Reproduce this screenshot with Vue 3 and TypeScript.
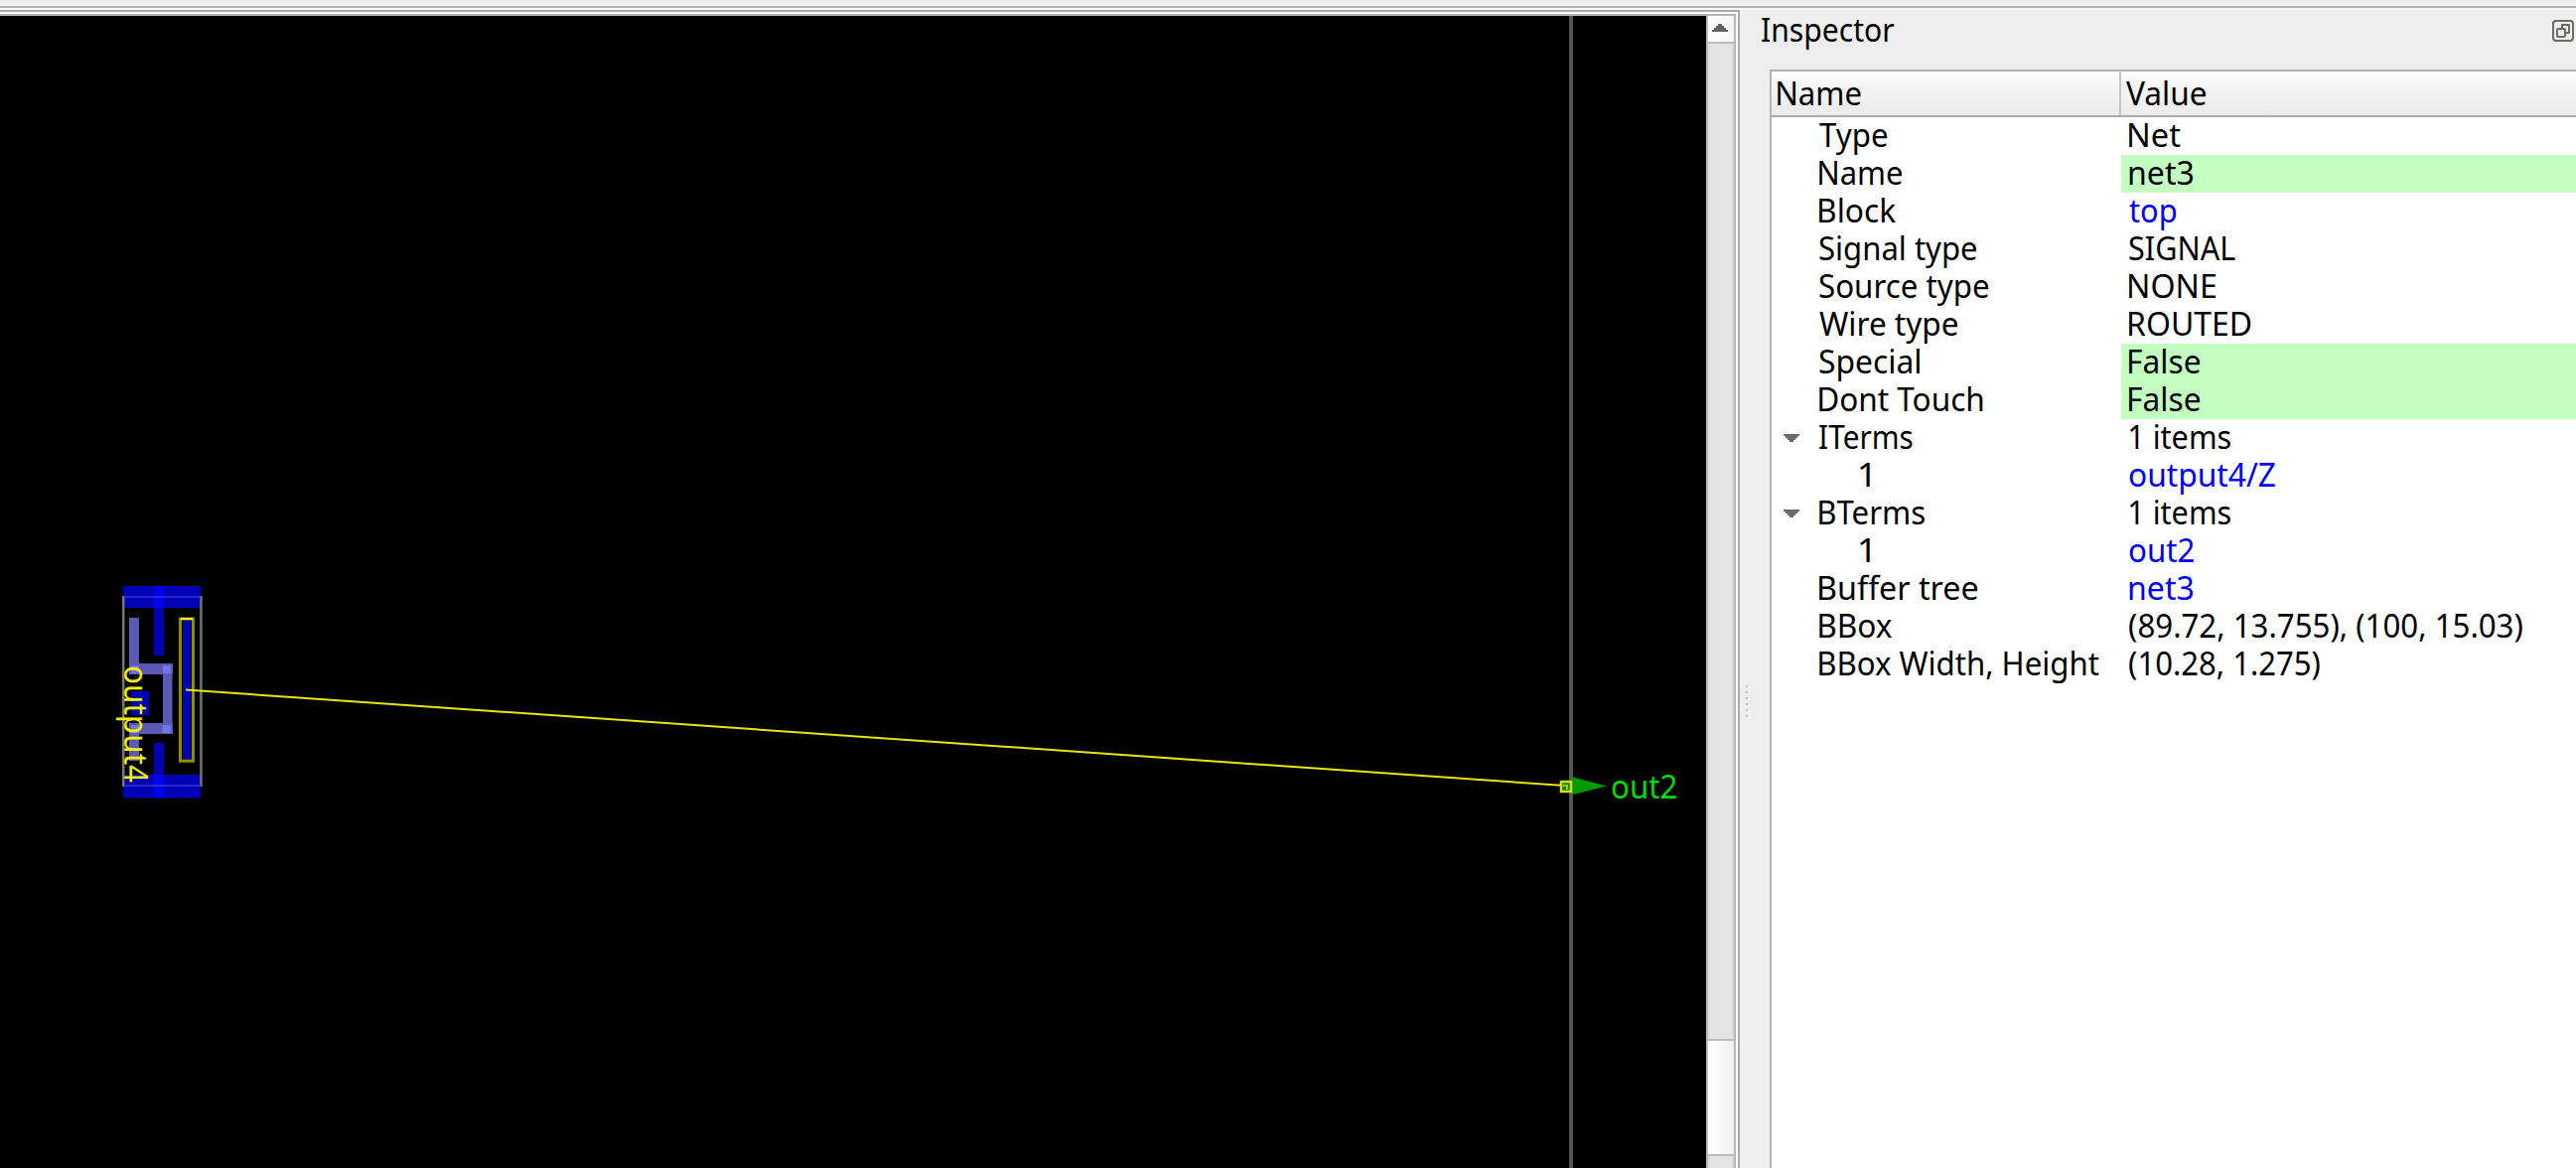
<script setup lang="ts">
import type { Directive } from 'vue'

interface Row {
  name: string
  nameWidth: number
  value: string
  valueWidth: number
  level?: number
  open?: boolean
  link?: boolean
  editable?: boolean
}

const rows: Row[] = [
  { name: 'Type', nameWidth: 68, value: 'Net', valueWidth: 52 },
  { name: 'Name', nameWidth: 83, value: 'net3', valueWidth: 64, editable: true },
  { name: 'Block', nameWidth: 77.5, value: 'top', valueWidth: 47.5, link: true },
  { name: 'Signal type', nameWidth: 158, value: 'SIGNAL', valueWidth: 107 },
  { name: 'Source type', nameWidth: 170, value: 'NONE', valueWidth: 87.5 },
  { name: 'Wire type', nameWidth: 139, value: 'ROUTED', valueWidth: 123 },
  { name: 'Special', nameWidth: 101, value: 'False', valueWidth: 71, editable: true },
  { name: 'Dont Touch', nameWidth: 164.5, value: 'False', valueWidth: 71, editable: true },
  { name: 'ITerms', nameWidth: 94, value: '1 items', valueWidth: 102.5, open: true },
  { name: '1', nameWidth: 11, value: 'output4/Z', valueWidth: 147, level: 1, link: true },
  { name: 'BTerms', nameWidth: 106.5, value: '1 items', valueWidth: 102.5, open: true },
  { name: '1', nameWidth: 11, value: 'out2', valueWidth: 65.5, level: 1, link: true },
  { name: 'Buffer tree', nameWidth: 159, value: 'net3', valueWidth: 64, link: true },
  { name: 'BBox', nameWidth: 73, value: '(89.72, 13.755), (100, 15.03)', valueWidth: 396 },
  { name: 'BBox Width, Height', nameWidth: 282, value: '(10.28, 1.275)', valueWidth: 192 },
]

// Condenses or expands a label so that its visible glyphs span the given width.
const vInk: Directive<HTMLElement, number> = {
  mounted(el, binding) {
    const ctx = document.createElement('canvas').getContext('2d')
    if (!ctx) return
    const style = getComputedStyle(el)
    ctx.font = `${style.fontSize} ${style.fontFamily}`
    const m = ctx.measureText(el.textContent ?? '')
    const scale = binding.value / (m.actualBoundingBoxLeft + m.actualBoundingBoxRight)
    el.style.transform = `translateX(${m.actualBoundingBoxLeft * scale}px) scaleX(${scale})`
  },
}
</script>

<template>
  <div class="window">
    <div class="toolbar-edge"></div>
    <div class="main">
      <div class="view-frame">
        <div class="view">
          <svg class="layout" viewBox="0 16 1718 1160" width="1718" height="1160">
            <rect x="1580" y="16" width="4" height="1160" fill="#555" />

            <g fill="#0000b4">
              <rect x="124" y="590" width="78" height="22" />
              <rect x="155" y="612" width="10" height="48" />
              <rect x="132" y="696" width="18" height="24" />
              <rect x="124" y="780" width="78" height="23.5" />
              <rect x="155" y="748" width="10" height="32" />
            </g>
            <g fill="#0000ec">
              <rect x="155" y="590" width="10" height="22" />
              <rect x="155" y="780" width="10" height="23.5" />
            </g>

            <g fill="#5a5ab4">
              <rect x="130" y="622" width="10" height="57" />
              <rect x="130" y="668" width="44" height="11" />
              <rect x="164" y="668" width="9.5" height="71" />
              <rect x="130" y="728" width="44" height="11" />
              <rect x="130" y="728" width="10" height="38" />
            </g>
            <g fill="#7474ec">
              <rect x="132" y="670" width="8" height="8" />
              <rect x="164" y="670" width="8" height="8" />
              <rect x="164" y="730" width="8" height="8" />
              <rect x="132" y="730" width="8" height="8" />
            </g>

            <g fill="#747474">
              <rect x="123" y="600" width="2.5" height="192" />
              <rect x="201.2" y="600" width="2.5" height="192" />
            </g>
            <g fill="#2828d2">
              <rect x="125.5" y="600" width="76" height="2" />
              <rect x="125.5" y="790" width="76" height="2" />
            </g>

            <rect x="184" y="624" width="8" height="142" fill="#0000b4" />
            <rect x="181.5" y="623" width="13" height="143.2" fill="none" stroke="#8e8e00" stroke-width="3" />
            <rect x="182" y="622" width="12" height="2" fill="#ff0" />

            <text
              class="label"
              transform="translate(125 670) rotate(90)"
              textLength="118"
              lengthAdjust="spacingAndGlyphs"
              fill="#f0f000"
            >output4</text>

            <polygon points="1582,782 1582,800.5 1618,791.6" fill="#009b00" />
            <line x1="187" y1="694.5" x2="1576" y2="791" stroke="#e6e600" stroke-width="2" />
            <rect x="1572" y="787" width="10" height="10" fill="#008c00" stroke="#dede00" stroke-width="2.4" />
            <path d="M1574 791h4v4" fill="none" stroke="#c8dc00" stroke-width="1.6" />
            <text
              class="label"
              x="1622"
              y="803.5"
              textLength="67.5"
              lengthAdjust="spacingAndGlyphs"
              fill="#00dc00"
            >out2</text>
          </svg>
          <div class="scrollbar">
            <div class="arrow-button">
              <svg width="26" height="26" viewBox="0 0 26 26">
                <path d="M4 16v-2h2v-2h2v-2h2v-2h4v2h2v2h2v2h2v2z" fill="#626262" />
              </svg>
            </div>
            <div class="groove"></div>
            <div class="thumb"></div>
            <div class="groove-end"></div>
          </div>
        </div>
      </div>

      <div class="splitter">
        <i v-for="n in 6" :key="n"></i>
      </div>

      <div class="dock">
        <div class="dock-title">
          <span v-ink="134" class="text">Inspector</span>
          <svg class="float-icon" width="22" height="22" viewBox="0 0 22 22" fill="none" stroke="#6e6c69" stroke-width="2">
            <rect x="1" y="1" width="20" height="20" rx="3" />
            <path d="M10 8V5h7v8h-3" />
            <rect x="5" y="9" width="8" height="8" rx="1" />
          </svg>
        </div>
        <div class="table">
          <div class="header">
            <div class="head-name"><span v-ink="83.5" class="text">Name</span></div>
            <div class="head-value"><span v-ink="80" class="text">Value</span></div>
          </div>
          <div v-for="(row, i) in rows" :key="i" class="row">
            <div class="name" :class="{ child: row.level }">
              <svg v-if="row.open" class="branch" width="16" height="10" viewBox="0 0 16 10">
                <path d="M0 0h16v2h-2v2h-2v2h-2v2H6V6H4V4H2V2H0z" fill="#6a6a6a" />
              </svg>
              <span v-ink="row.nameWidth" class="text">{{ row.name }}</span>
            </div>
            <div class="value" :class="{ link: row.link, editable: row.editable }">
              <span v-ink="row.valueWidth" class="text">{{ row.value }}</span>
            </div>
          </div>
        </div>
      </div>
    </div>
  </div>
</template>

<style>
body {
  margin: 0;
  overflow: hidden;
}
</style>

<style scoped>
.window {
  display: flex;
  flex-direction: column;
  width: 2594px;
  height: 1176px;
  overflow: hidden;
  background: #eeeeee;
  color: #000;
  font-family: 'Noto Sans', 'Open Sans', sans-serif;
  font-size: 33px;
}
.toolbar-edge {
  box-sizing: border-box;
  flex: none;
  height: 10px;
  border-bottom: 2px solid #f7f7f7;
  background: linear-gradient(#efefef 6px, #b4b4b4 6px);
}
.main {
  display: flex;
  flex: 1;
  min-height: 0;
}
.view-frame {
  box-sizing: border-box;
  width: 1752px;
  border: solid #aaa;
  border-width: 2px 2px 0 0;
  padding: 2px 2px 0 0;
  background: #fff;
}
.view {
  box-sizing: border-box;
  display: flex;
  height: 1162px;
  border: solid #b6b6b6;
  border-width: 2px 2px 0 0;
}
.layout {
  flex: none;
  display: block;
  background: #000;
}
.label {
  font-family: 'Noto Sans', 'Open Sans', sans-serif;
  font-size: 32.5px;
}
.scrollbar {
  display: flex;
  flex-direction: column;
  width: 26px;
  border-left: 2px solid #bcbcbc;
}
.arrow-button {
  height: 26px;
  border-bottom: 2px solid #bcbcbc;
  background: linear-gradient(90deg, #fff, #f4f4f4);
}
.arrow-button svg {
  display: block;
}
.groove,
.groove-end {
  background: linear-gradient(90deg, #dadada 2px, #e4e4e4 2px, #e4e4e4 24px, #dadada 24px);
}
.groove {
  height: 1002px;
}
.groove-end {
  flex: 1;
}
.thumb {
  height: 114px;
  border: solid #bcbcbc;
  border-width: 2px 0;
  background: linear-gradient(90deg, #fff, #f0f0f0);
}
.splitter {
  display: flex;
  flex-direction: column;
  gap: 4px;
  width: 22px;
  padding-top: 680px;
}
.splitter i {
  width: 2px;
  height: 2px;
  margin-left: 6px;
  background: #b8b8b8;
  box-shadow: 2px 1px #f8f8f8;
}
.dock {
  flex: 1;
  min-width: 0;
}
.dock-title {
  display: flex;
  align-items: flex-start;
  justify-content: space-between;
  height: 60px;
}
.dock-title .text {
  margin: 2px 0 0 -0.5px;
}
.float-icon {
  margin: 10px 2px 0 0;
}
.text {
  display: block;
  width: fit-content;
  height: 36px;
  line-height: 36px;
  white-space: pre;
  transform-origin: 0 50%;
}
.table {
  height: 1104px;
  margin-left: 8px;
  border: solid #b4b4b4;
  border-width: 2px 0 0 2px;
  background: #fff;
}
.header {
  display: flex;
  height: 44px;
  border-bottom: 2px solid #aaa;
  background: linear-gradient(#fdfdfd, #f2f2f2 50%, #ebebeb);
}
.head-name {
  width: 344px;
  padding: 4px 0 0 6px;
  border-right: 2px solid #c4c4c4;
}
.head-value {
  flex: 1;
  padding: 4px 0 0 4.5px;
}
.row {
  display: flex;
  height: 38px;
}
.name {
  display: flex;
  align-items: flex-start;
  box-sizing: border-box;
  width: 352px;
  padding-left: 47.5px;
}
.name.child {
  padding-left: 87.5px;
}
.branch {
  margin: 15px 18.5px 0 -35.5px;
  padding-right: 1px;
  box-sizing: content-box;
}
.value {
  flex: 1;
  padding-left: 7.75px;
}
.value.editable {
  background: #c4ffc2;
}
.value.link {
  color: #0000ff;
}
</style>
